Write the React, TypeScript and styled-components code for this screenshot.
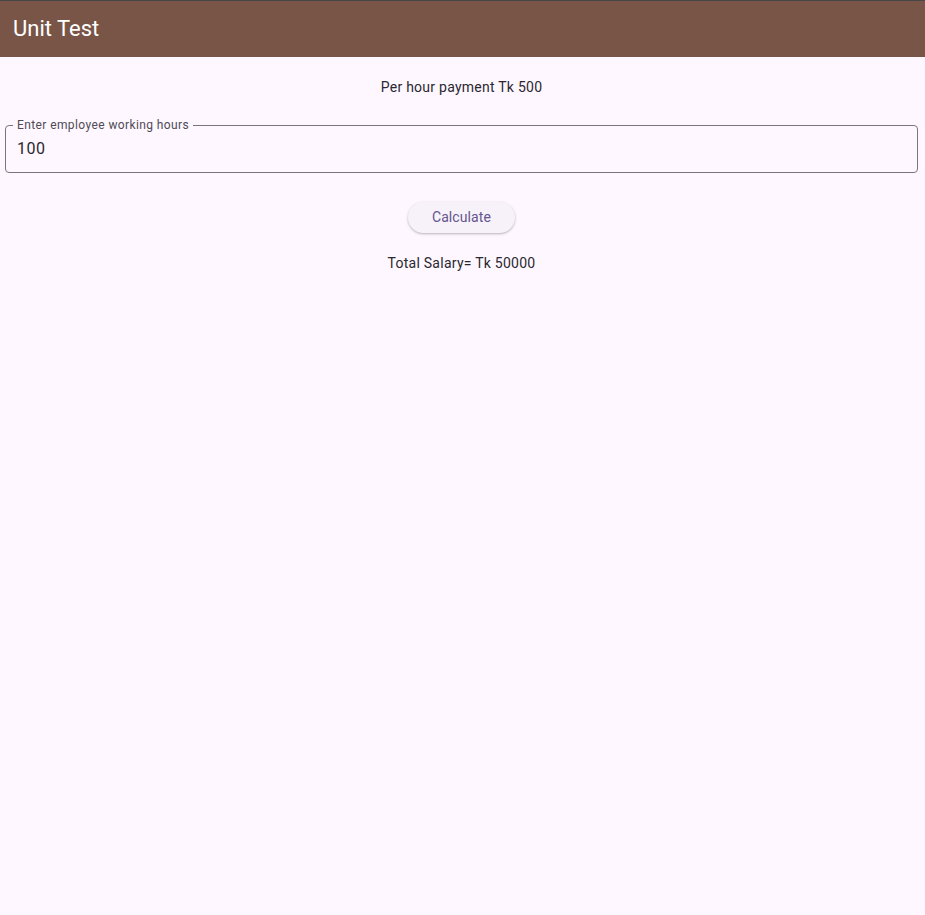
import React from "react";
import styled, { createGlobalStyle } from "styled-components";

const Global = createGlobalStyle`
  html, body { margin: 0; padding: 0; background: #fef7ff; }
  body { font-family: Roboto, "Noto Sans", sans-serif; }
  * { box-sizing: border-box; }
`;

const Page = styled.div`
  min-height: 915px;
  background: #fef7ff;
  display: flex;
  flex-direction: column;
`;

const AppBar = styled.header`
  height: 57px;
  background: #795548;
  border-top: 1px solid #474747;
  display: flex;
  align-items: center;
  padding-left: 13px;
`;

const Title = styled.h1`
  margin: 0;
  font-size: 22px;
  font-weight: 400;
  color: #ffffff;
  line-height: 28px;
`;

const Body = styled.main`
  display: flex;
  flex-direction: column;
  align-items: center;
  padding: 20px 7px 0 5px;
`;

const Text = styled.p`
  margin: 0;
  font-size: 14px;
  line-height: 20px;
  color: #2a2730;
  letter-spacing: 0.25px;
`;

const Field = styled.div`
  position: relative;
  align-self: stretch;
  margin-top: 28px;
  height: 48px;
  border: 1px solid #79747e;
  border-radius: 4px;
  display: flex;
  align-items: center;
  padding: 0 11px;
`;

const Label = styled.label`
  position: absolute;
  left: 7px;
  top: -8px;
  padding: 0 4px;
  background: #fef7ff;
  font-size: 12px;
  line-height: 14px;
  color: #4f4b55;
  letter-spacing: 0.4px;
`;

const Input = styled.input`
  border: none;
  outline: none;
  background: transparent;
  font-family: Roboto, "Noto Sans", sans-serif;
  font-size: 16px;
  line-height: 24px;
  color: #2a2730;
  padding: 0;
  margin: 0;
  width: 100%;
  letter-spacing: 0.5px;
`;

const Button = styled.button`
  margin-top: 29px;
  height: 31px;
  padding: 0 24px 1px;
  border: none;
  border-radius: 16px;
  background: #f7f2fa;
  color: #65558f;
  font-family: Roboto, "Noto Sans", sans-serif;
  font-size: 14px;
  letter-spacing: 0.1px;
  box-shadow: 0 1px 2px rgba(0, 0, 0, 0.2), 0 1px 3px 1px rgba(0, 0, 0, 0.06);
`;

const Result = styled(Text)`
  margin-top: 20px;
`;

export default function App() {
  return (
    <Page>
      <Global />
      <AppBar>
        <Title>Unit Test</Title>
      </AppBar>
      <Body>
        <Text>Per hour payment Tk 500</Text>
        <Field>
          <Label htmlFor="hours">Enter employee working hours</Label>
          <Input id="hours" defaultValue="100" />
        </Field>
        <Button>Calculate</Button>
        <Result>Total Salary= Tk 50000</Result>
      </Body>
    </Page>
  );
}
